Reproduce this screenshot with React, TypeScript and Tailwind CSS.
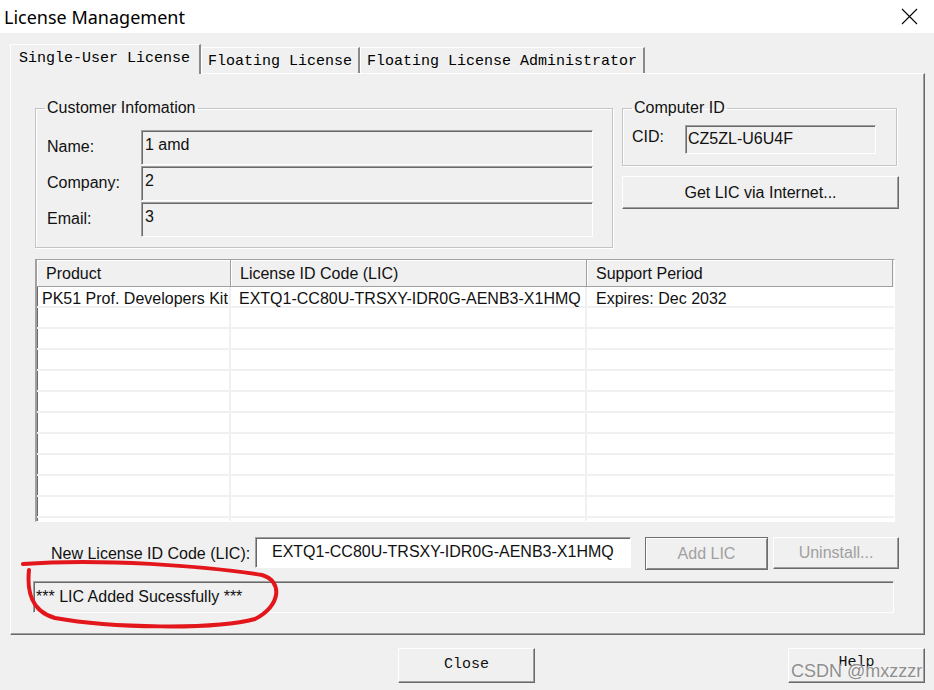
import React from 'react';

const sunken =
  'border border-t-[#a0a0a0] border-l-[#a0a0a0] border-b-white border-r-white shadow-[inset_1px_1px_0_#696969]';
const raised =
  'border border-t-white border-l-white border-r-[#696969] border-b-[#696969] shadow-[inset_-1px_-1px_0_#a0a0a0] bg-[#f0f0f0]';
const etched = 'border border-[#c4c4c4] shadow-[inset_1px_1px_0_#fff,1px_1px_0_#fff]';

function Tab({ label, active }: { label: string; active?: boolean }) {
  return (
    <div
      className={
        active
          ? 'relative z-10 -mb-[1px] flex h-[30px] items-start border-l border-t border-white border-r-2 border-r-[#8a8a8a] bg-[#f0f0f0] pl-[8px] pr-[9px] pt-[5px]'
          : 'flex h-[26px] items-start border-l border-t border-white border-r-2 border-r-[#8a8a8a] bg-[#f0f0f0] pl-[6px] pr-[6px] pt-[5px]'
      }
    >
      <span className="font-['Liberation_Mono',monospace] text-[15px] leading-[18px] text-black">
        {label}
      </span>
    </div>
  );
}

function Field({ label, value }: { label: string; value: string }) {
  return (
    <div className="flex h-[36px] items-start">
      <div className="w-[94px] pt-[8px] leading-[18px]">{label}</div>
      <div className={`h-[35px] w-[452px] pl-[3px] pt-[5px] leading-[18px] ${sunken}`}>{value}</div>
    </div>
  );
}

const rows = Array.from({ length: 12 });

export default function App() {
  return (
    <div className="relative h-[690px] w-[934px] overflow-hidden bg-[#f0f0f0] font-['Liberation_Sans',Arial,sans-serif] text-[16px] text-[#111]">
      {/* title bar */}
      <div className="flex h-[33px] items-center justify-between bg-white pl-[4px] pr-[16px]">
        <span className="font-['Noto_Sans',sans-serif] text-[18px] leading-[22px] text-black">
          License Management
        </span>
        <svg width="17" height="17" viewBox="0 0 17 17">
          <path d="M1 1L16 16M16 1L1 16" stroke="#000" strokeWidth="1.1" />
        </svg>
      </div>

      <div className="pl-[10px] pt-[11px]">
        {/* tabs */}
        <div className="flex h-[29px] items-end">
          <Tab label="Single-User License" active />
          <Tab label="Floating License" />
          <Tab label="Floating License Administrator" />
        </div>

        {/* tab panel */}
        <div className="h-[562px] w-[915px] border border-t-white border-l-white border-r-[#696969] border-b-[#696969] shadow-[inset_-1px_-1px_0_#a0a0a0] pl-[24px] pt-[25px]">
          <div className="flex items-start">
            <fieldset className={`h-[149px] w-[578px] p-0 ${etched}`}>
              <legend className="ml-[9px] px-[2px] leading-[18px]">Customer Infomation</legend>
              <div className="mt-[13px] pl-[11px]">
                <Field label="Name:" value="1 amd" />
                <Field label="Company:" value="2" />
                <Field label="Email:" value="3" />
              </div>
            </fieldset>

            <div className="ml-[9px] flex flex-col">
              <fieldset className={`h-[67px] w-[275px] p-0 ${etched}`}>
                <legend className="ml-[9px] px-[2px] leading-[18px]">Computer ID</legend>
                <div className="mt-[8px] flex items-start pl-[9px]">
                  <div className="w-[53px] pt-[3px] leading-[18px]">CID:</div>
                  <div className={`h-[29px] w-[191px] pl-[2px] pt-[4px] leading-[18px] ${sunken}`}>
                    CZ5ZL-U6U4F
                  </div>
                </div>
              </fieldset>
              <button className={`mt-[10px] h-[33px] w-[277px] leading-[18px] ${raised}`}>
                Get LIC via Internet...
              </button>
            </div>
          </div>

          {/* list view */}
          <div className={`mt-[11px] h-[263px] w-[860px] overflow-hidden bg-white ${sunken} border-l-2 border-l-[#8a8a8a]`}>
            <div className="flex h-[27px] bg-[#f0f0f0]">
              <div className="w-[194px] border-b border-r border-[#a0a0a0] pl-[9px] pt-[5px] leading-[18px] shadow-[inset_1px_1px_0_#fff]">
                Product
              </div>
              <div className="w-[356px] border-b border-r border-[#a0a0a0] pl-[9px] pt-[5px] leading-[18px] shadow-[inset_1px_1px_0_#fff]">
                License ID Code (LIC)
              </div>
              <div className="w-[306px] border-b border-r border-[#a0a0a0] pl-[9px] pt-[5px] leading-[18px] shadow-[inset_1px_1px_0_#fff]">
                Support Period
              </div>
            </div>
            {rows.map((_, i) => (
              <div key={i} className="flex h-[21px] border-b-2 border-[#f0f0f0] leading-[18px]">
                <div className="w-[194px] border-r-2 border-[#f0f0f0] pl-[5px] pt-[3px]">
                  {i === 0 ? 'PK51 Prof. Developers Kit' : ''}
                </div>
                <div className="w-[356px] border-r-2 border-[#f0f0f0] pl-[8px] pt-[3px]">
                  {i === 0 ? 'EXTQ1-CC80U-TRSXY-IDR0G-AENB3-X1HMQ' : ''}
                </div>
                <div className="w-[306px] pl-[9px] pt-[3px]">{i === 0 ? 'Expires: Dec 2032' : ''}</div>
              </div>
            ))}
          </div>

          {/* new lic row */}
          <div className="mt-[15px] flex items-start">
            <div className="ml-[16px] w-[204px] pt-[8px] leading-[18px]">New License ID Code (LIC):</div>
            <div className={`h-[31px] w-[376px] bg-white pl-[16px] pt-[5px] leading-[18px] ${sunken}`}>
              EXTQ1-CC80U-TRSXY-IDR0G-AENB3-X1HMQ
            </div>
            <button className="ml-[14px] h-[33px] w-[123px] border border-[#6e6e6e] bg-[#f0f0f0] leading-[18px] text-[#a0a0a0] shadow-[inset_1px_1px_0_#fff,inset_-1px_-1px_0_#8a8a8a]">
              Add LIC
            </button>
            <button className={`ml-[5px] h-[32px] w-[126px] leading-[18px] text-[#a0a0a0] ${raised}`}>
              Uninstall...
            </button>
          </div>

          {/* status */}
          <div className={`-ml-[2px] mt-[11px] h-[32px] w-[861px] pl-[2px] pt-[6px] leading-[18px] ${sunken}`}>
            *** LIC Added Sucessfully ***
          </div>
        </div>

        {/* bottom buttons */}
        <div className="mt-[13px] flex">
          <button className={`ml-[388px] h-[35px] w-[137px] font-['Liberation_Mono',monospace] text-[15px] ${raised}`}>
            Close
          </button>
          <button className={`relative ml-[253px] h-[35px] w-[137px] font-['Liberation_Mono',monospace] text-[15px] ${raised}`}>
            <span className="relative -top-[2px]">Help</span>
            <span className="absolute bottom-[1px] left-[2px] font-['Liberation_Sans',sans-serif] text-[18px] leading-[20px] text-[#8e8e8e] [text-shadow:0_0_2px_#fff]">
              CSDN @mxzzzr
            </span>
          </button>
        </div>
      </div>

      {/* red annotation */}
      <svg className="pointer-events-none absolute left-0 top-0" width="934" height="690" viewBox="0 0 934 690">
        <path
          d="M23 564 C100 558, 205 566, 262 575 C283 581, 281 606, 255 619 C215 630, 110 628, 55 618 C30 611, 27 590, 29 570"
          fill="none"
          stroke="#e3161b"
          strokeWidth="4"
          strokeLinecap="round"
        />
      </svg>
    </div>
  );
}
